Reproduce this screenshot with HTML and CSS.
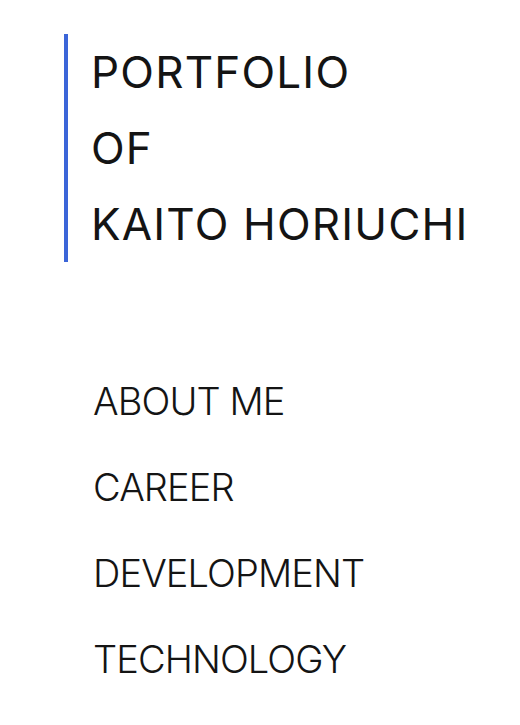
FILE: index.html
```html
<!DOCTYPE html>
<html lang="ja">
<head>
<meta charset="utf-8">
<title>Portfolio of Kaito Horiuchi</title>
<link rel="stylesheet" href="styles.css">
</head>
<body>
<main class="page">
  <h1 class="title">
    <span class="title-line">PORTFOLIO</span>
    <span class="title-line">OF</span>
    <span class="title-line">KAITO HORIUCHI</span>
  </h1>
  <nav class="menu">
    <a class="menu-item" href="#about">ABOUT ME</a>
    <a class="menu-item" href="#career">CAREER</a>
    <a class="menu-item" href="#development">DEVELOPMENT</a>
    <a class="menu-item" href="#technology">TECHNOLOGY</a>
  </nav>
</main>
</body>
</html>
```

FILE: styles.css
```css
html, body {
  margin: 0;
  padding: 0;
  background: #ffffff;
}

body {
  font-family: Inter, "Noto Sans", sans-serif;
  color: #141414;
}

.page {
  padding: 34px 0 0 64px;
}

.title {
  margin: 0;
  border-left: 4px solid #3b65d8;
  padding-left: 23px;
  font-size: 44px;
  font-weight: 400;
  letter-spacing: 1.2px;
  line-height: 76px;
  display: flex;
  flex-direction: column;
}

.title-line {
  display: block;
  white-space: nowrap;
}

.menu {
  margin-top: 96px;
  padding-left: 29px;
  display: flex;
  flex-direction: column;
}

.menu-item {
  font-size: 38px;
  font-weight: 300;
  letter-spacing: -0.9px;
  line-height: 86px;
  color: #141414;
  text-decoration: none;
  white-space: nowrap;
}
```
